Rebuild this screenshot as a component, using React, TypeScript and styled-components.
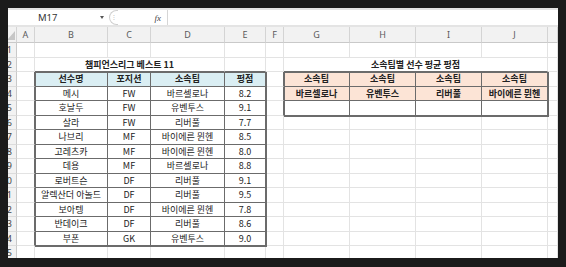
import React from "react";
import styled, { createGlobalStyle } from "styled-components";

const GlobalStyle = createGlobalStyle`
  html, body {
    margin: 0;
    padding: 0;
    background: #1b1b1b;
  }
  body {
    padding: 8px;
    font-family: "Noto Sans CJK KR", "Noto Sans", sans-serif;
  }
`;

const COLS = [9, 18, 73, 43, 74, 41, 18, 66, 66, 66, 66, 10];
const LETTERS = ["", "A", "B", "C", "D", "E", "F", "G", "H", "I", "J", ""];
const GRID = "#e3e3e3";
const DARK = "#6b6b6b";

const players: [string, string, string, string][] = [
  ["메시", "FW", "바르셀로나", "8.2"],
  ["호날두", "FW", "유벤투스", "9.1"],
  ["살라", "FW", "리버풀", "7.7"],
  ["나브리", "MF", "바이에른 뮌헨", "8.5"],
  ["고레츠카", "MF", "바이에른 뮌헨", "8.0"],
  ["데용", "MF", "바르셀로나", "8.8"],
  ["로버트슨", "DF", "리버풀", "9.1"],
  ["알렉산더 아놀드", "DF", "리버풀", "9.5"],
  ["보아텡", "DF", "바이에른 뮌헨", "7.8"],
  ["반데이크", "DF", "리버풀", "8.6"],
  ["부폰", "GK", "유벤투스", "9.0"],
];

const teams = ["바르셀로나", "유벤투스", "리버풀", "바이에른 뮌헨"];

const Window = styled.div`
  width: 550px;
  height: 250px;
  background: #fff;
  overflow: hidden;
`;

const FormulaBar = styled.div`
  height: 15px;
  display: flex;
  align-items: stretch;
  border-top: 2px solid #e4e4e4;
  border-bottom: 2px solid #e4e4e4;
  font-family: "Noto Sans", sans-serif;
  font-size: 9.5px;
  color: #333;
`;

const NameBox = styled.div`
  width: 100px;
  display: flex;
  align-items: center;
  padding-left: 30px;
  box-sizing: border-box;
  position: relative;
`;

const Drop = styled.span`
  position: absolute;
  right: 4px;
  top: 6px;
  width: 0;
  height: 0;
  border-left: 2px solid transparent;
  border-right: 2px solid transparent;
  border-top: 3px solid #555;
`;

const Handle = styled.div`
  width: 8px;
  margin-left: 1px;
  border: 1px solid #cfcfcf;
  border-right: none;
  border-radius: 8px 0 0 8px;
  color: #c4c4c4;
  font-size: 7px;
  display: flex;
  align-items: center;
  justify-content: center;
`;

const Fx = styled.div`
  width: 49px;
  display: flex;
  align-items: center;
  justify-content: flex-end;
  padding-right: 6px;
  box-sizing: border-box;
  font-family: "Liberation Serif", serif;
  font-style: italic;
  font-size: 9px;
  color: #444;
`;

const Input = styled.div`
  flex: 1;
  border-left: 1px solid #d6d6d6;
`;

const Sheet = styled.div`
  display: grid;
  grid-template-columns: ${COLS.map((c) => c + "px").join(" ")};
  grid-template-rows: 16px;
  grid-auto-rows: 14.5px;
`;

const ColHead = styled.div`
  background: #f2f2f2;
  border-right: 1px solid #d4d4d4;
  border-bottom: 1px solid #c9c9c9;
  box-sizing: border-box;
  display: flex;
  align-items: center;
  justify-content: center;
  font-family: "Noto Sans", sans-serif;
  font-size: 9px;
  color: #5a5a5a;
  position: relative;
`;

const Corner = styled.span`
  position: absolute;
  right: 1px;
  bottom: 2px;
  width: 8px;
  height: 9px;
  background: #c6c6c6;
  clip-path: polygon(100% 0, 100% 100%, 0 100%);
`;

const RowHead = styled.div<{ $row: number }>`
  grid-row: ${(p) => p.$row};
  grid-column: 1;
  background: #f2f2f2;
  border-right: 1px solid #c9c9c9;
  border-bottom: 1px solid #dcdcdc;
  box-sizing: border-box;
  display: flex;
  align-items: center;
  justify-content: flex-end;
  padding-right: 4px;
  overflow: hidden;
  white-space: nowrap;
  font-family: "Noto Sans", sans-serif;
  font-size: 9px;
  color: #444;
`;

const Cell = styled.div<{
  $row: number;
  $col: number;
  $span: number;
  $fill?: string;
  $bold?: boolean;
  $right?: string;
  $bottom?: string;
}>`
  grid-row: ${(p) => p.$row};
  grid-column: ${(p) => p.$col} / span ${(p) => p.$span};
  background: ${(p) => p.$fill ?? "#fff"};
  border-right: 1px solid ${(p) => p.$right ?? GRID};
  border-bottom: 1px solid ${(p) => p.$bottom ?? GRID};
  box-sizing: border-box;
  display: flex;
  align-items: center;
  justify-content: center;
  white-space: nowrap;
  overflow: hidden;
  font-size: 9px;
  font-weight: ${(p) => (p.$bold ? 700 : 400)};
  color: #222;
`;

const TableFrame = styled.div<{ $rows: string; $cols: string }>`
  grid-row: ${(p) => p.$rows};
  grid-column: ${(p) => p.$cols};
  border: 1px solid ${DARK};
  margin: 0 -1px -1px 0;
  pointer-events: none;
  z-index: 1;
`;

type CellDef = {
  text?: string;
  span?: number;
  fill?: string;
  bold?: boolean;
  right?: string;
  bottom?: string;
};

function buildRow(r: number): CellDef[] {
  const row: CellDef[] = [];
  const inT1 = r >= 3 && r <= 14;
  const inT2 = r >= 3 && r <= 5;

  // A
  row.push({ right: inT1 ? DARK : undefined });

  if (r === 2) {
    row.push({ text: "챔피언스리그 베스트 11", span: 3, bold: true, bottom: DARK });
    row.push({ bottom: DARK });
  } else if (inT1) {
    const vals =
      r === 3 ? ["선수명", "포지션", "소속팀", "평점"] : players[r - 4];
    vals.forEach((v) =>
      row.push({
        text: v,
        fill: r === 3 ? "#daeef3" : undefined,
        bold: r === 3,
        right: DARK,
        bottom: DARK,
      })
    );
  } else {
    for (let i = 0; i < 4; i++) row.push({});
  }

  // F
  row.push({ right: inT2 ? DARK : undefined });

  if (r === 2) {
    row.push({ text: "소속팀별 선수 평균 평점", span: 4, bold: true, bottom: DARK });
  } else if (inT2) {
    for (let i = 0; i < 4; i++) {
      row.push({
        text: r === 3 ? "소속팀" : r === 4 ? teams[i] : "",
        fill: r < 5 ? "#fce4d6" : undefined,
        bold: r < 5,
        right: DARK,
        bottom: DARK,
      });
    }
  } else {
    for (let i = 0; i < 4; i++) row.push({});
  }

  // K
  row.push({});
  return row;
}

export default function App() {
  const rows = Array.from({ length: 15 }, (_, i) => i + 1);
  return (
    <>
      <GlobalStyle />
      <Window>
        <FormulaBar>
          <NameBox>
            M17
            <Drop />
          </NameBox>
          <Handle>⁝</Handle>
          <Fx>fx</Fx>
          <Input />
        </FormulaBar>
        <Sheet>
          {LETTERS.map((l, i) => (
            <ColHead key={"h" + i}>{i === 0 ? <Corner /> : l}</ColHead>
          ))}
          {rows.map((r) => {
            let col = 2;
            return (
              <React.Fragment key={r}>
                <RowHead $row={r + 1}>{r}</RowHead>
                {buildRow(r).map((c, j) => {
                  const span = c.span ?? 1;
                  const start = col;
                  col += span;
                  return (
                    <Cell
                      key={j}
                      $row={r + 1}
                      $col={start}
                      $span={span}
                      $fill={c.fill}
                      $bold={c.bold}
                      $right={c.right}
                      $bottom={c.bottom}
                    >
                      {c.text}
                    </Cell>
                  );
                })}
              </React.Fragment>
            );
          })}
          <TableFrame $rows="4 / 16" $cols="3 / 7" />
          <TableFrame $rows="4 / 7" $cols="8 / 12" />
        </Sheet>
      </Window>
    </>
  );
}
